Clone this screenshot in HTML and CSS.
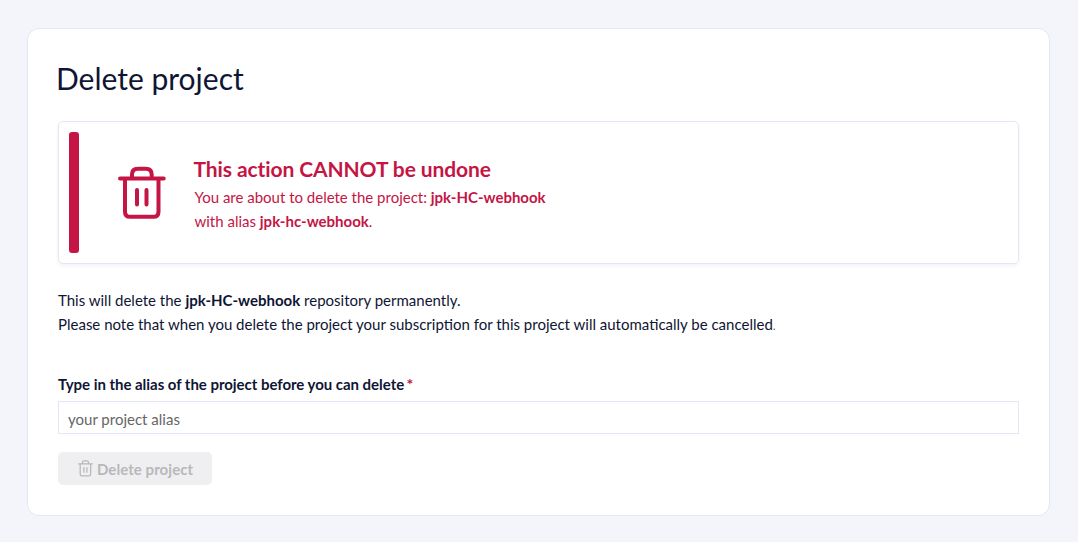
FILE: index.html
```html
<!DOCTYPE html>
<html lang="en">
<head>
<meta charset="utf-8">
<title>Delete project</title>
<link rel="stylesheet" href="styles.css">
</head>
<body>
<main class="card">
  <h1 class="title">Delete project</h1>
  <section class="alert">
    <div class="alert-bar"></div>
    <svg class="alert-icon" viewBox="0 0 48 54" fill="none" stroke="currentColor" stroke-width="4" stroke-linecap="round" stroke-linejoin="round"><path d="M2 12.4H45.7M7 12.4V45.7Q7 50.8 12.1 50.8H35.4Q40.5 50.8 40.5 45.7V12.4M14 12.4V8.6Q14 2.8 19.8 2.8H27.9Q33.7 2.8 33.7 8.6V12.4M19 24V38.6M28.5 24V38.6"/></svg>
    <div class="alert-body">
      <h2 class="alert-title">This action CANNOT be undone</h2>
      <p class="alert-text">You are about to delete the project: <b>jpk-HC-webhook</b><br>with alias <b>jpk-hc-webhook</b>.</p>
    </div>
  </section>
  <p class="note">This will delete the <b>jpk-HC-webhook</b> repository permanently.<br>Please note that when you delete the project your subscription for this project will automatically be cancelled<span class="stop">.</span></p>
  <form class="form">
    <label class="label" for="alias">Type in the alias of the project before you can delete<span class="required">*</span></label>
    <input class="input" id="alias" type="text" placeholder="your project alias">
    <button class="button" type="button" disabled>
      <svg class="button-icon" viewBox="0 0 48 54" fill="none" stroke="currentColor" stroke-width="4" stroke-linecap="round" stroke-linejoin="round"><path d="M2 12.4H45.7M7 12.4V45.7Q7 50.8 12.1 50.8H35.4Q40.5 50.8 40.5 45.7V12.4M14 12.4V8.6Q14 2.8 19.8 2.8H27.9Q33.7 2.8 33.7 8.6V12.4M19 24V38.6M28.5 24V38.6"/></svg>
      <span class="button-text">Delete project</span>
    </button>
  </form>
</main>
</body>
</html>
```
FILE: styles.css
```css
* { box-sizing: border-box; }
body { margin: 0; padding: 28px 28px 26px 27px; height: 542px; background: #f4f5fb; color: #0f1535; font-family: Lato, sans-serif; font-size: 15px; line-height: 24px; }
.card { height: 488px; padding: 31px 30px 29px; background: #fff; border: 1px solid #e3e6f5; border-radius: 12px; }
.title { margin: 0 0 25px -2px; font-size: 30px; line-height: 36px; font-weight: 400; }
.alert { display: flex; height: 143px; padding: 10px; border: 1px solid #e3e6f5; border-radius: 5px; box-shadow: 0 2px 4px rgba(20, 30, 60, .06); color: #c41545; }
.alert-bar { width: 10px; height: 121px; border-radius: 3px; background: #c41545; }
.alert-icon { width: 48px; height: 54px; margin: 34px 27.5px 0 39px; }
.alert-body { padding-top: 23px; }
.alert-title { margin: 0; font-size: 21px; line-height: 28px; font-weight: 700; letter-spacing: -.1px; }
.alert-text { margin: 2px 0 0 1px; letter-spacing: -.005px; }
.note { margin: 24px 0 34px; }
.stop { font-size: 12px; opacity: .7; }
.form { display: flex; flex-direction: column; align-items: flex-start; }
.label { height: 24px; font-weight: 700; letter-spacing: -.035px; }
.required { margin-left: 2.5px; font-size: 16px; line-height: 20px; color: #c41545; }
.input { width: 100%; height: 33px; margin: 5px 0 18px; padding: 3px 9px 0; border: 1px solid #e3e6f5; font: 15px Lato, sans-serif; }
.input::placeholder { color: #666; }
.button { display: flex; align-items: center; gap: 4px; width: 154px; height: 33px; padding: 0 20px; border: 0; border-radius: 5px; background: #efeff1; color: #b8b8ba; font: 700 15px Lato, sans-serif; white-space: nowrap; }
.button-icon { width: 15px; height: 17px; flex: none; }
.button-text { padding-top: 1px; letter-spacing: .06px; }
```
